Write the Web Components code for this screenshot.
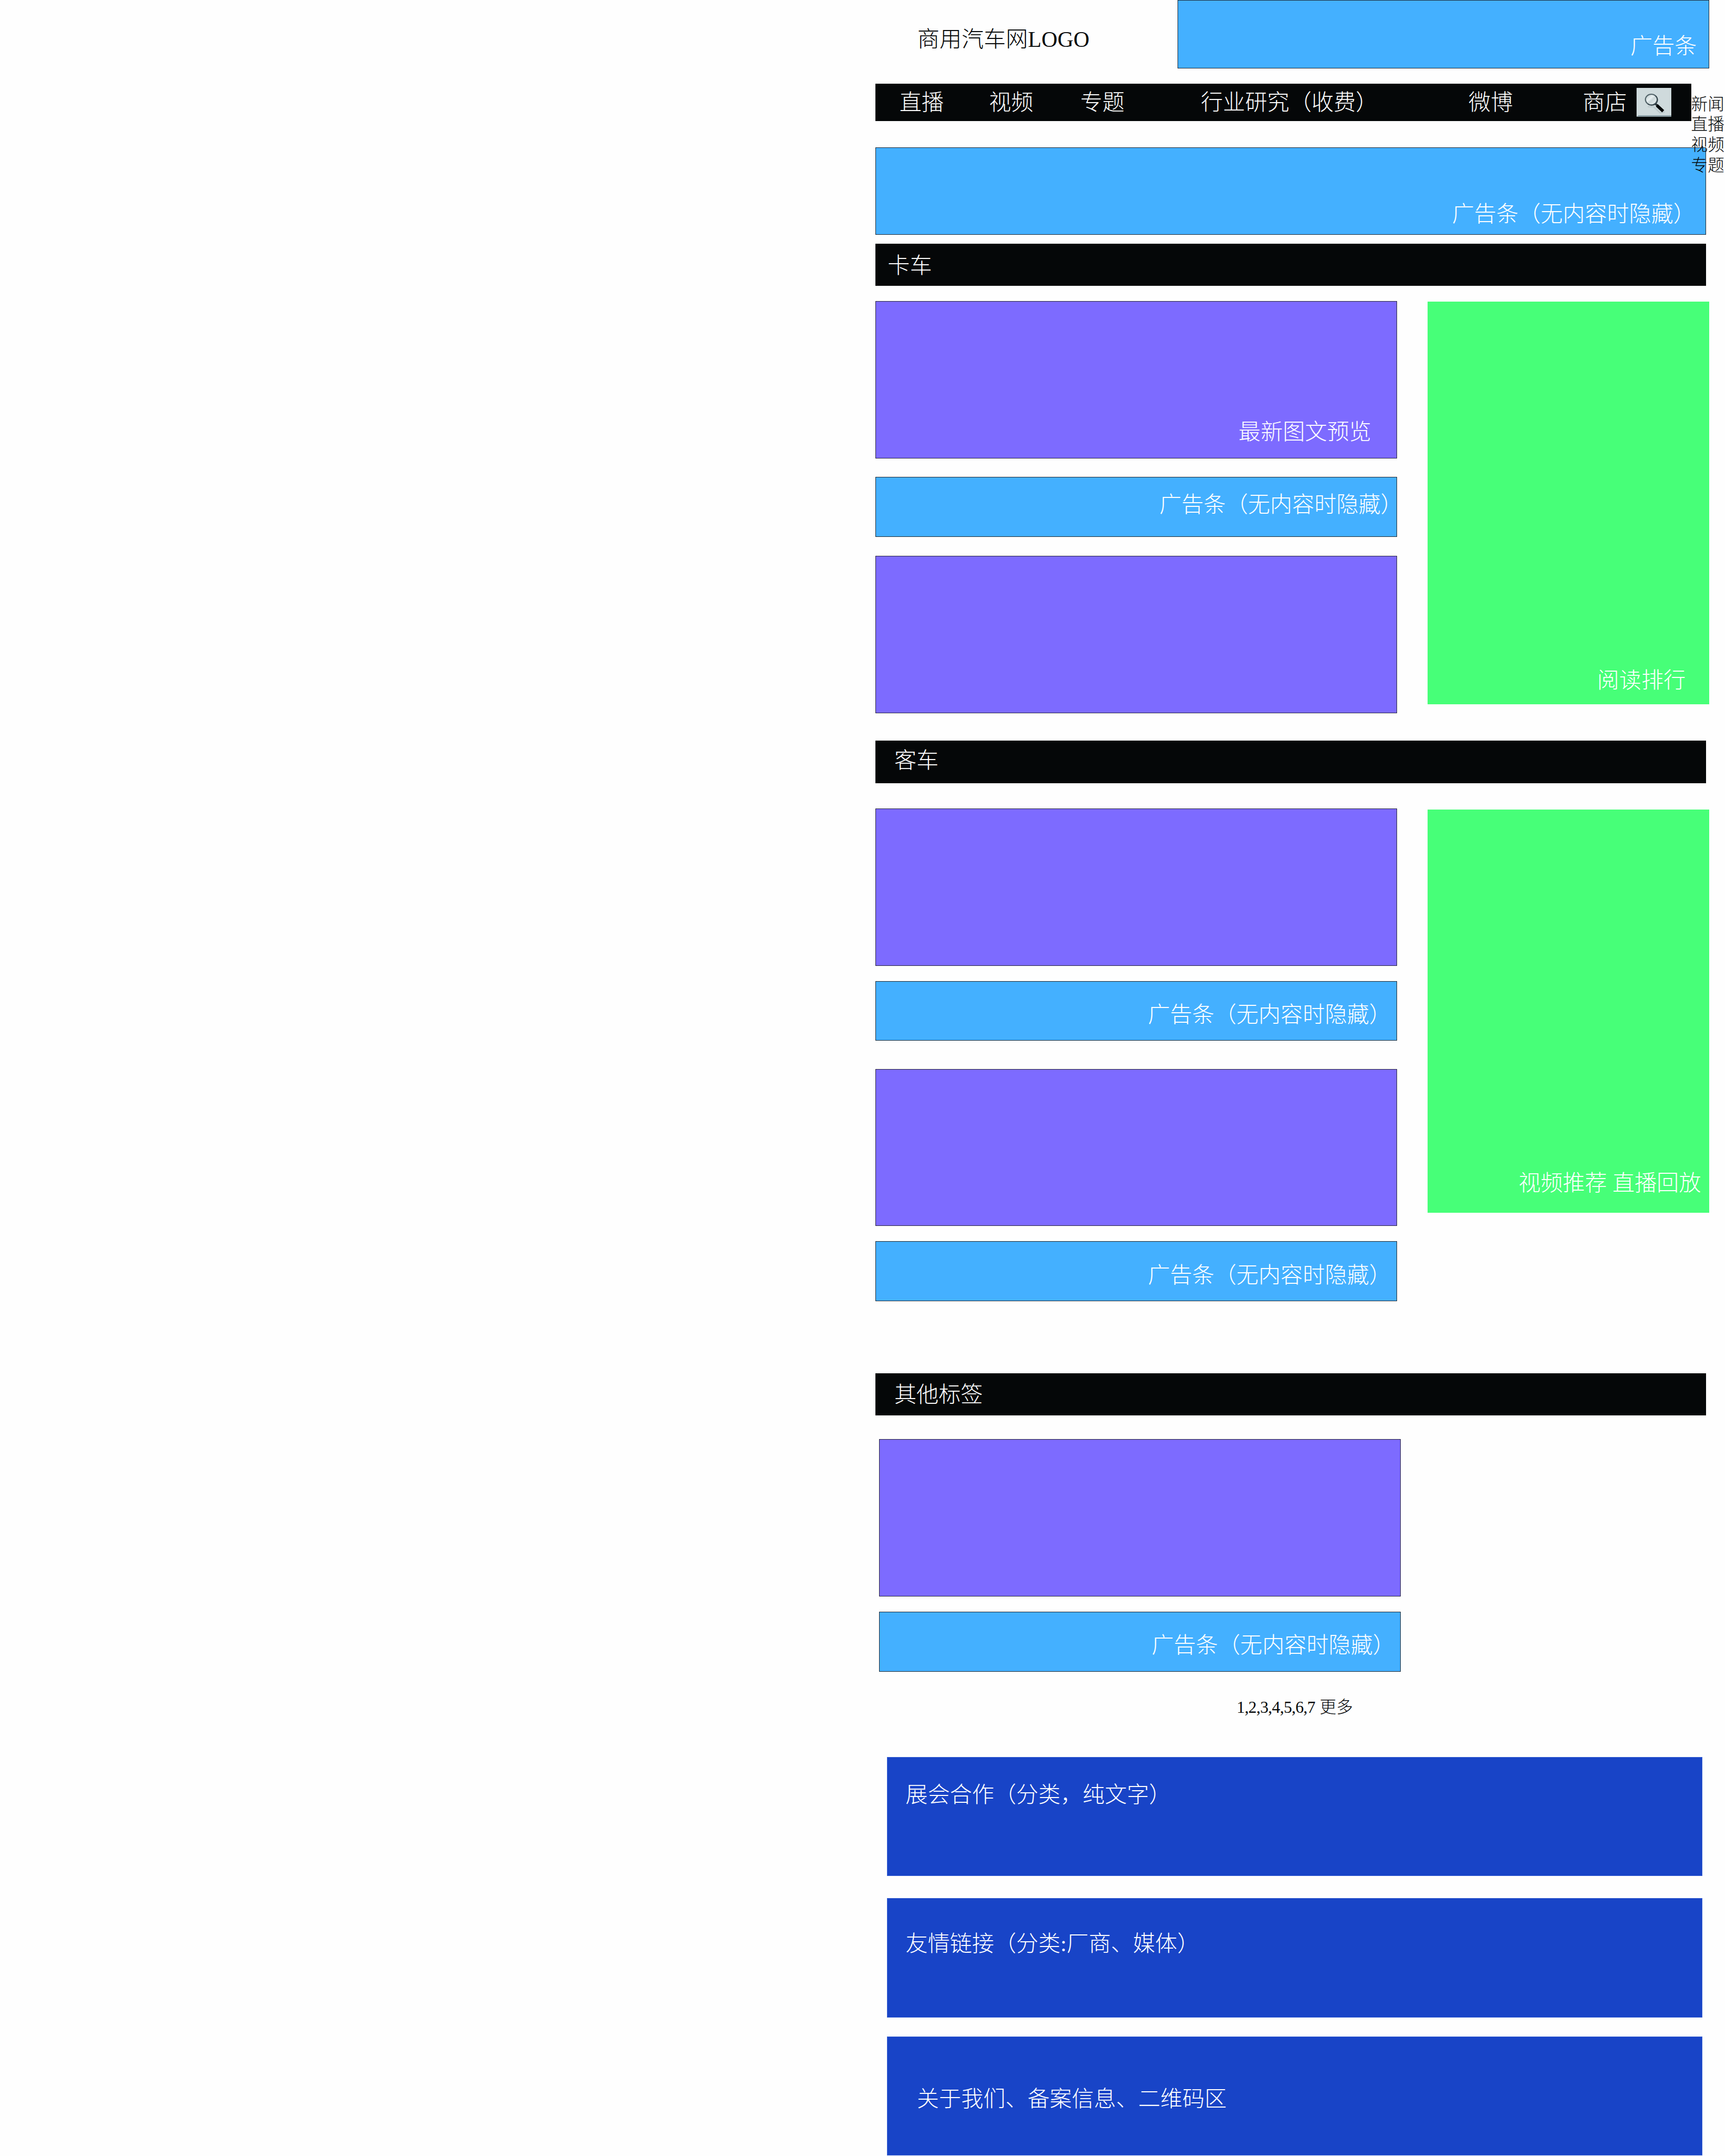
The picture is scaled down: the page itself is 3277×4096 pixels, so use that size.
<!DOCTYPE html>
<html lang="zh-CN">
<head>
<meta charset="utf-8">
<title>商用汽车网</title>
<style>
  :root { --u: 0.89462px; }
  html, body { margin: 0; padding: 0; background: #fefefe; }
  body {
    width: 3277px; height: 4096px; overflow: hidden;
    font-family: "Liberation Serif", "Noto Sans CJK SC", serif;
    font-weight: 300; color: #050708;
  }
</style>
</head>
<body>
<site-page>
  <site-header slot="header">
    <text-label slot="logo" x="90" mid="81.5">商用汽车网LOGO</text-label>
    <wire-box slot="ad" kind="ad" w="1130" h="145" x="963" mid="97">广告条</wire-box>
  </site-header>
  <site-nav slot="header">
    <text-label x="52" mid="38">直播</text-label>
    <text-label x="242" mid="38">视频</text-label>
    <text-label x="436" mid="38">专题</text-label>
    <text-label x="692" mid="38">行业研究（收费）</text-label>
    <text-label x="1260.5" mid="38">微博</text-label>
    <text-label x="1503" mid="38">商店</text-label>
    <search-button slot="search"></search-button>
    <side-menu slot="menu">
      <span>新闻</span><span>直播</span><span>视频</span><span>专题</span>
    </side-menu>
  </site-nav>
  <wire-box kind="ad" w="1763.5" h="185" gap="56.5" x="1225.5" mid="139.5">广告条（无内容时隐藏）</wire-box>

  <wire-box kind="bar" w="1763.5" h="89" gap="19.5" x="27" mid="45">卡车</wire-box>
  <content-row gap="32">
    <wire-box kind="post" w="1108" h="335" x="772" mid="277">最新图文预览</wire-box>
    <wire-box kind="ad" w="1108" h="127" gap="39" x="604" mid="57">广告条（无内容时隐藏）</wire-box>
    <wire-box kind="post" w="1108" h="335" gap="40"></wire-box>
    <wire-box slot="aside" kind="rank" w="597.5" h="856" gap="1" x="361" mid="804">阅读排行</wire-box>
  </content-row>

  <wire-box kind="bar" w="1763.5" h="90" gap="58" x="41" mid="40.5">客车</wire-box>
  <content-row gap="54">
    <wire-box kind="post" w="1108" h="334" ></wire-box>
    <wire-box kind="ad" w="1108" h="127" gap="32.5" x="579.5" mid="70">广告条（无内容时隐藏）</wire-box>
    <wire-box kind="post" w="1108" h="334" gap="59.5"></wire-box>
    <wire-box kind="ad" w="1108" h="127" gap="32.5" x="579.5" mid="70">广告条（无内容时隐藏）</wire-box>
    <wire-box slot="aside" kind="rank" w="597.5" h="856" gap="2" x="194" mid="792">视频推荐 直播回放</wire-box>
  </content-row>

  <wire-box kind="bar" w="1763.5" h="90" gap="152.5" x="41" mid="44">其他标签</wire-box>
  <content-row gap="50.5" indent="8">
    <wire-box kind="post" w="1108" h="334"></wire-box>
    <wire-box kind="ad" w="1108" h="127.5" gap="32" x="579.5" mid="70">广告条（无内容时隐藏）</wire-box>
    <page-links></page-links>
  </content-row>

  <site-footer slot="footer">
    <wire-box kind="foot" w="1732" h="253" x="41" mid="79.5">展会合作（分类，纯文字）</wire-box>
    <wire-box kind="foot" w="1732" h="253" gap="47.5" x="41" mid="94.5">友情链接（分类:厂商、媒体）</wire-box>
    <wire-box kind="foot" w="1732" h="252.5" gap="41" x="65" mid="130.5">关于我们、备案信息、二维码区</wire-box>
  </site-footer>
</site-page>

<script>
  // Lengths are given in design units; --u converts one unit to pixels.
  const u = n => `calc(${n} * var(--u))`;

  class BaseElement extends HTMLElement {
    constructor() {
      super();
      this.attachShadow({ mode: 'open' }).innerHTML = this.template();
    }
    num(name) { return parseFloat(this.getAttribute(name)) || 0; }
    vars(...names) {
      for (const n of names) this.style.setProperty('--' + n, u(this.num(n)));
    }
  }

  class SitePage extends BaseElement {
    template() {
      return `<style>
        :host { display: flex; flex-direction: column; align-items: flex-start;
          padding-left: calc(1859 * var(--u)); }
        header, main, footer { display: flex; flex-direction: column; align-items: flex-start; }
      </style>
      <header><slot name="header"></slot></header>
      <main><slot></slot></main>
      <footer><slot name="footer"></slot></footer>`;
    }
  }

  class SiteHeader extends BaseElement {
    template() {
      return `<style>
        :host { display: flex; height: calc(145 * var(--u)); }
        .logo { width: calc(641 * var(--u)); display: grid; }
      </style>
      <div class="logo"><slot name="logo"></slot></div><slot name="ad"></slot>`;
    }
  }

  // Nav items share one grid cell and are spaced by their own leading padding.
  class SiteNav extends BaseElement {
    template() {
      return `<style>
        :host { display: flex; position: relative; margin-top: calc(33 * var(--u));
          width: calc(1732 * var(--u)); height: calc(79 * var(--u));
          background: #050708; color: #fff; }
        nav { display: grid; width: calc(1616.5 * var(--u)); flex: none; }
        ::slotted(text-label) { grid-area: 1 / 1; }
      </style>
      <nav><slot></slot></nav><slot name="search"></slot><slot name="menu"></slot>`;
    }
  }

  class TextLabel extends BaseElement {
    template() {
      return `<style>
        :host { display: block; box-sizing: border-box; white-space: pre;
          font-size: calc(47 * var(--u)); line-height: 1;
          padding-left: calc(var(--x) - 1 * var(--u));
          padding-top: calc(var(--mid) - 21.6 * var(--u)); }
      </style><slot></slot>`;
    }
    connectedCallback() { this.vars('x', 'mid'); }
  }

  class WireBox extends BaseElement {
    template() {
      return `<style>
        :host { display: block; box-sizing: border-box; flex: none;
          width: var(--w); height: var(--h); margin-top: var(--gap); color: #fff; }
        :host([kind="ad"]) { background: #44b0ff; box-shadow: inset 0 0 0 1px #1d2730; }
        :host([kind="post"]) { background: #7d6bff; box-shadow: inset 0 0 0 1px #26243a; }
        :host([kind="bar"]) { background: #050708; }
        :host([kind="rank"]) { background: #47ff78; }
        :host([kind="foot"]) { background: #1844c7; box-shadow: inset 0 0 0 1px #3a62d2; }
        p { margin: 0; white-space: pre; font-size: calc(47 * var(--u)); line-height: 1;
          padding-left: calc(var(--x) - 1 * var(--u));
          padding-top: calc(var(--mid) - 21.6 * var(--u)); }
        :host(:empty) p { display: none; }
      </style><p><slot></slot></p>`;
    }
    connectedCallback() { this.vars('w', 'h', 'gap', 'x', 'mid'); }
  }

  class ContentRow extends BaseElement {
    template() {
      return `<style>
        :host { display: flex; align-items: flex-start; gap: calc(64.5 * var(--u));
          margin-top: var(--gap); padding-left: var(--indent); }
        .col { display: flex; flex-direction: column; }
      </style>
      <div class="col"><slot></slot></div>
      <div class="col"><slot name="aside"></slot></div>`;
    }
    connectedCallback() { this.vars('gap', 'indent'); }
  }

  class SearchButton extends BaseElement {
    template() {
      return `<style>
        :host { display: block; width: calc(74 * var(--u)); height: calc(61 * var(--u));
          margin-top: calc(9 * var(--u)); }
        svg { display: block; width: 100%; height: 100%; }
      </style>
      <svg viewBox="0 0 74 61">
        <defs><linearGradient id="g" x1="0" y1="0" x2="1" y2="1">
          <stop offset="0" stop-color="#aebdc1"/><stop offset=".4" stop-color="#e9f0f1"/>
          <stop offset=".55" stop-color="#ccd7d9"/><stop offset="1" stop-color="#f0f5f5"/>
        </linearGradient></defs>
        <rect width="74" height="61" fill="#cfdadc"/>
        <path d="M3 58H74V61H0V60H3Z" fill="#8a9ea5"/>
        <path d="M24 40L36 40L50 53L60 51" fill="none" stroke="#bdc9cc" stroke-width="3"/>
        <path d="M39 33L45 38" stroke="#2b3438" stroke-width="4.5"/>
        <path d="M43 37L56.500 49.500" stroke="#050808" stroke-width="6.500"/>
        <ellipse cx="31.300" cy="24.700" rx="12.500" ry="11.300" fill="url(#g)" stroke="#53646a" stroke-width="2.400"/>
        <path d="M40 16.500A12.500 11.300 0 0 1 24 34.300" fill="none" stroke="#2c3a40" stroke-width="1.500"/>
      </svg>`;
    }
  }

  // Drop-down that hangs off the right end of the nav, above the banner.
  class SideMenu extends BaseElement {
    template() {
      return `<style>
        :host { position: absolute; z-index: 2; left: 100%; top: calc(23 * var(--u));
          display: flex; flex-direction: column; color: #050708;
          font-size: calc(35.3 * var(--u)); line-height: calc(43.200 * var(--u)); white-space: nowrap; }
      </style><slot></slot>`;
    }
  }

  class PageLinks extends BaseElement {
    template() {
      return `<style>
        :host { display: flex; gap: calc(9.5 * var(--u)); line-height: 1;
          font-size: calc(35.3 * var(--u)); margin-top: calc(59 * var(--u));
          padding-left: calc(759 * var(--u)); height: calc(122 * var(--u)); }
        .n { letter-spacing: calc(-0.75 * var(--u)); }
      </style><span class="n">1,2,3,4,5,6,7</span><span>更多</span>`;
    }
  }

  class SiteFooter extends BaseElement {
    template() {
      return `<style>
        :host { display: flex; flex-direction: column; padding-left: calc(24 * var(--u)); }
      </style><slot></slot>`;
    }
  }

  customElements.define('text-label', TextLabel);
  customElements.define('wire-box', WireBox);
  customElements.define('search-button', SearchButton);
  customElements.define('side-menu', SideMenu);
  customElements.define('page-links', PageLinks);
  customElements.define('content-row', ContentRow);
  customElements.define('site-nav', SiteNav);
  customElements.define('site-header', SiteHeader);
  customElements.define('site-footer', SiteFooter);
  customElements.define('site-page', SitePage);
</script>
</body>
</html>
